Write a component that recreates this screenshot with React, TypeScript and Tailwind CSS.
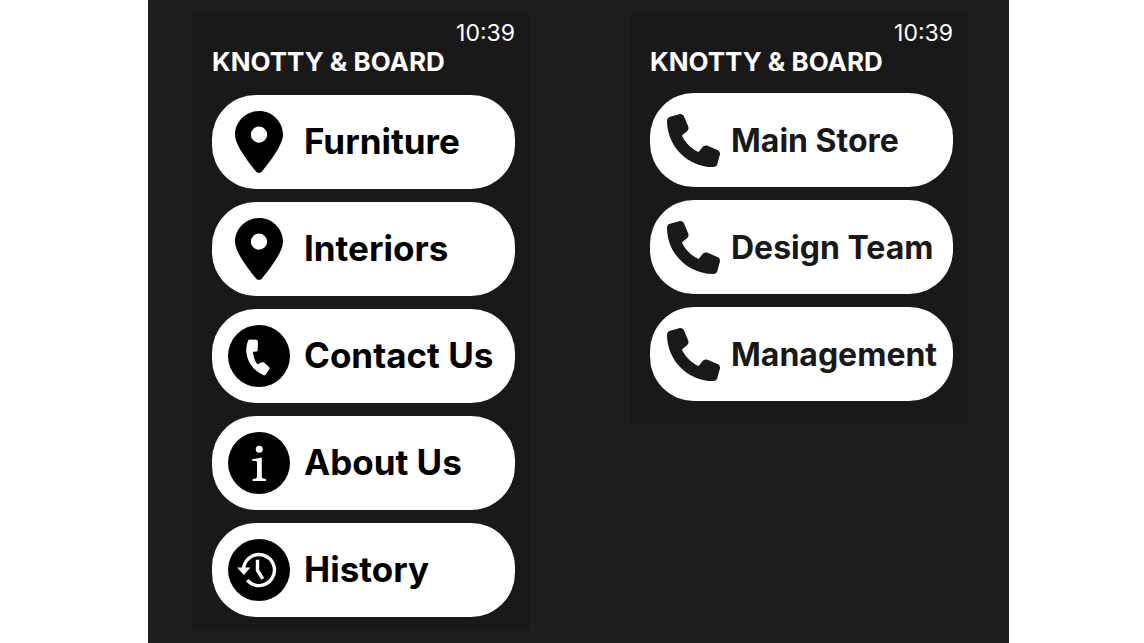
import type { ReactNode } from "react";
import { FaPhone } from "react-icons/fa6";

function PinIcon() {
  return (
    <svg viewBox="0 0 384 496" className="h-[62px] w-12" fill="currentColor" aria-hidden="true">
      <path
        fillRule="evenodd"
        d="M215.7 484C267 420 384 275 384 190C384 85 298 0 192 0S0 85 0 190c0 85 117 230 168.3 294c12.3 15.3 35.1 15.3 47.4 0zM192 124a65 65 0 1 1 0 130a65 65 0 1 1 0-130z"
      />
    </svg>
  );
}

function ReceiverIcon() {
  return (
    <svg viewBox="0 0 62 62" className="size-[62px]" aria-hidden="true">
      <circle cx="31" cy="31" r="31" fill="#000" />
      <path
        d="M20.5 14.8Q21.2 14.2 28.2 14.7Q29.8 14.9 29.8 16.4V25Q29.8 26.2 28.5 26.4L25.6 26.8Q24.8 27 25 28.2Q25.8 34 28.8 38.4Q29.7 39.6 30.6 38.8Q33 37 35.4 37.2Q36 37.3 36.6 37.9L41 42Q42 43 41.2 44.2L37.8 49.4Q37 50.6 35.6 50.2C24.5 45.5 18.3 35 18.2 25Q18.2 19 20.5 14.8z"
        fill="#fff"
      />
    </svg>
  );
}

function InfoIcon() {
  return (
    <svg viewBox="0 0 62 62" className="size-[62px]" aria-hidden="true">
      <circle cx="31" cy="31" r="31" fill="#000" />
      <circle cx="31.3" cy="17.2" r="3.5" fill="#fff" />
      <path
        d="M24.2 27.2L33.8 25.6V44.6Q33.8 46.3 35.2 46.6L38 47.1V48.9H24.6V47.1L27.6 46.6Q29 46.3 29 44.6V30.6Q29 29.1 27.6 29L24.2 28.8z"
        fill="#fff"
      />
    </svg>
  );
}

function HistoryIcon() {
  return (
    <svg viewBox="0 0 62 62" className="size-[62px]" aria-hidden="true">
      <circle cx="31" cy="31" r="31" fill="#000" />
      <path d="M15.5 30A15.5 15.5 0 1 1 19.2 41.2" fill="none" stroke="#fff" strokeWidth="3.4" />
      <path d="M9 28.4H22.4L15.8 36z" fill="#fff" />
      <path d="M29.5 20.8V31.4L34.8 39.8" fill="none" stroke="#fff" strokeWidth="3.4" />
    </svg>
  );
}

type Item = { label: string; icon: ReactNode };

const categories: Item[] = [
  { label: "Furniture", icon: <PinIcon /> },
  { label: "Interiors", icon: <PinIcon /> },
  { label: "Contact Us", icon: <ReceiverIcon /> },
  { label: "About Us", icon: <InfoIcon /> },
  { label: "History", icon: <HistoryIcon /> },
];

const contacts = ["Main Store", "Design Team", "Management"];

function Header() {
  return (
    <header>
      <p className="pt-[5px] text-right text-[23px] leading-[31px]">10:39</p>
      <h1 className="text-[26px] leading-[26px] font-bold">KNOTTY &amp; BOARD</h1>
    </header>
  );
}

const pill = "flex h-[94px] w-full items-center rounded-[44px] bg-white text-left whitespace-nowrap";

export default function App() {
  return (
    <div className="min-h-screen bg-white pr-[135px] pl-[148px] font-['Inter',sans-serif] [font-optical-sizing:none]">
      <main className="flex min-h-screen items-start justify-between bg-[#1e1e1e] pt-[13px] pr-[41px] pl-11 text-white">
        <section className="w-[338px] bg-[#191919] pr-[15px] pb-3 pl-5">
          <Header />
          <nav className="mt-5 flex flex-col gap-[13px]">
            {categories.map((item) => (
              <button key={item.label} type="button" className={`${pill} gap-[14px] pl-4 text-black`}>
                <span className="flex w-[62px] shrink-0 justify-center">{item.icon}</span>
                <span className="pb-0.5 text-[35px] leading-10 font-bold">{item.label}</span>
              </button>
            ))}
          </nav>
        </section>
        <section className="w-[338px] bg-[#191919] pr-[15px] pb-[23px] pl-5">
          <Header />
          <nav className="mt-[18px] flex flex-col gap-[13px]">
            {contacts.map((label) => (
              <button key={label} type="button" className={`${pill} gap-[11px] pl-[17px] text-[#191919]`}>
                <FaPhone className="size-[53px] shrink-0" aria-hidden="true" />
                <span className="pt-0.5 text-[32px] leading-10 font-bold">{label}</span>
              </button>
            ))}
          </nav>
        </section>
      </main>
    </div>
  );
}
